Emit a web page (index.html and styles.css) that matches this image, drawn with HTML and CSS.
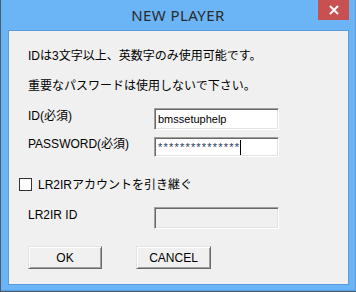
FILE: index.html
```html
<!DOCTYPE html>
<html lang="ja">
<head>
    <meta charset="UTF-8">
    <title>NEW PLAYER</title>
    <link rel="stylesheet" href="styles.css">
</head>
<body>
    <div class="window">
        <div class="titlebar">
            <span></span>
            <div class="title">NEW PLAYER</div>
            <div class="close-btn">
                <svg width="10" height="10" viewBox="0 0 10 10">
                    <path d="M1 1 L9 9 M9 1 L1 9" stroke="#fff" stroke-width="2"/>
                </svg>
            </div>
        </div>

        <div class="panel">
            <p class="note first">IDは3文字以上、英数字のみ使用可能です。</p>
            <p class="note">重要なパスワードは使用しないで下さい。</p>

            <div class="field id-row">
                <label>ID(必須)</label>
                <div class="textbox">bmssetuphelp</div>
            </div>
            <div class="field pw-row">
                <label>PASSWORD(必須)</label>
                <div class="textbox short"><span class="stars">***************</span><span class="caret"></span></div>
            </div>

            <div class="check-row">
                <span class="checkbox"></span>
                <span>LR2IRアカウントを引き継ぐ</span>
            </div>

            <div class="field ir-row">
                <label>LR2IR ID</label>
                <div class="textbox disabled"></div>
            </div>

            <div class="buttons">
                <div class="btn">OK</div>
                <div class="btn cancel">CANCEL</div>
            </div>
        </div>
    </div>
</body>
</html>
```

FILE: styles.css
```css
body {
    margin: 0;
    background-color: #4a5d70;
    font-family: "Liberation Sans", "Noto Sans CJK JP", sans-serif;
    font-size: 12px;
    color: #000;
}
.window {
    margin-left: 1px;
    width: 355px;
    height: 291px;
    box-sizing: border-box;
    background-color: #6bb4f6;
    border-right: 1px solid #5a9edc;
    border-bottom: 1px solid #5a9edc;
}
.titlebar {
    display: grid;
    grid-template-columns: 1fr auto 1fr;
    height: 30px;
}
.title {
    font-family: "Noto Sans", sans-serif;
    font-size: 15px;
    line-height: 30px;
    color: #2b2b2b;
    letter-spacing: 0.4px;
}
.close-btn {
    justify-self: end;
    margin-right: 6px;
    width: 31px;
    height: 20px;
    background-color: #c75050;
    display: flex;
    align-items: center;
    justify-content: center;
}
.close-btn svg {
    display: block;
}
.panel {
    margin-left: 7px;
    width: 341px;
    height: 255px;
    box-sizing: border-box;
    background-color: #f0f0f0;
    border: 1px solid #5b9bd8;
    padding: 17px 0 0 19px;
}
.note {
    margin: 0 0 14px;
    line-height: 16px;
    white-space: nowrap;
}
.field {
    display: grid;
    grid-template-columns: 126px 125px;
    align-items: start;
}
.field label {
    line-height: 16px;
    padding-top: 0;
}
.id-row {
    margin-top: 0;
}
.id-row label {
    margin-top: 0;
}
.pw-row {
    margin-top: 7px;
}
.pw-row label {
    margin-top: -1px;
}
.ir-row {
    margin-top: 16px;
}
.textbox {
    height: 22px;
    box-sizing: border-box;
    background-color: #fff;
    border: 1px solid;
    border-color: #a0a0a0 #fff #fff #a0a0a0;
    box-shadow: inset 1px 1px 0 #696969, inset -1px -1px 0 #e3e3e3;
    padding: 3px 0 0 3px;
    font-size: 11px;
    line-height: 15px;
    color: #000;
}
.textbox.short {
    height: 20px;
    padding-top: 2px;
    display: flex;
    align-items: flex-start;
}
.stars {
    letter-spacing: 1.2px;
    color: #2a3a5a;
}
.caret {
    width: 1px;
    height: 15px;
    margin-left: 0;
    background-color: #000;
}
.textbox.disabled {
    background-color: #f0f0f0;
}
.check-row {
    display: flex;
    align-items: center;
    gap: 6px;
    margin: 21px 0 0 -9px;
    height: 13px;
    line-height: 16px;
}
.checkbox {
    width: 13px;
    height: 13px;
    box-sizing: border-box;
    border: 1px solid #333;
    background-color: #fff;
}
.buttons {
    display: flex;
    gap: 34px;
    margin-top: 17px;
}
.btn {
    width: 74px;
    height: 23px;
    box-sizing: border-box;
    background-color: #f0f0f0;
    border: 1px solid;
    border-color: #e3e3e3 #696969 #696969 #e3e3e3;
    box-shadow: inset 1px 1px 0 #fff, inset -1px -1px 0 #a0a0a0;
    display: flex;
    align-items: center;
    justify-content: center;
    font-size: 12px;
}
.btn.cancel {
    width: 75px;
}
```
